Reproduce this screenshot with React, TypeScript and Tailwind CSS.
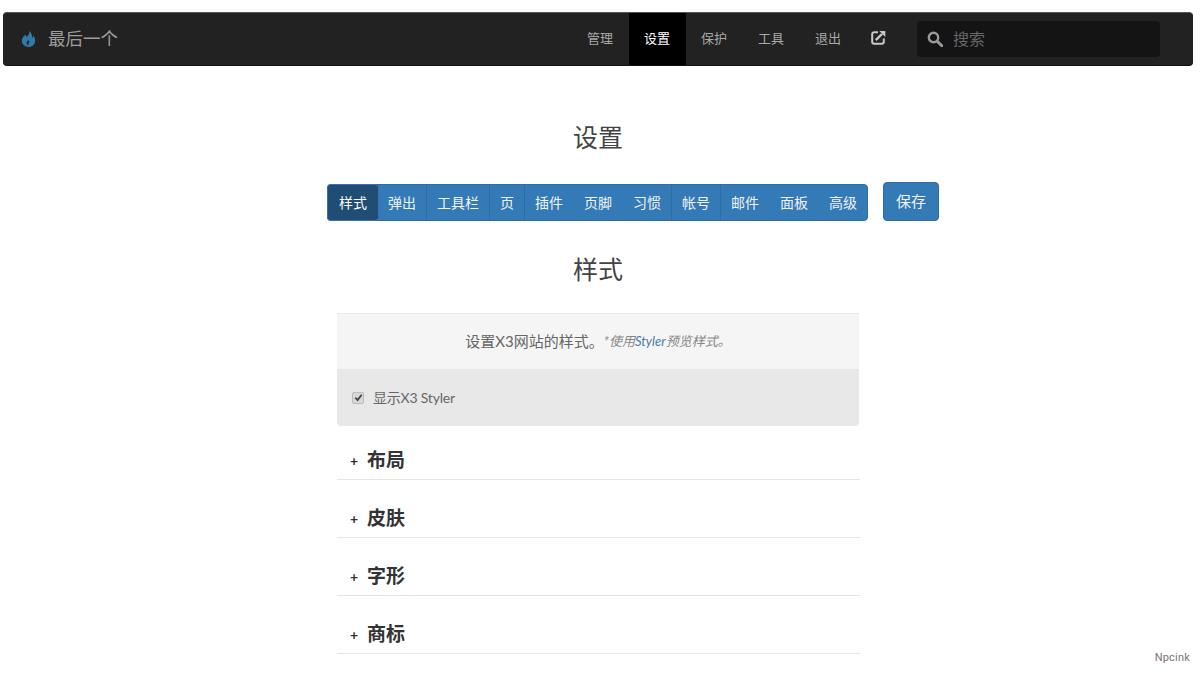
import React from "react";

const tabs: [string, string][] = [
  ["样式", "flex items-center rounded-[3px] bg-[#204d74] px-[11px] text-[14px] text-white shadow-[0_0_0_1px_#3a6fb0]"],
  ["弹出", "flex items-center px-[10px] text-[14px] text-[#f2f2f2]"],
  ["工具栏", "flex items-center border-l border-[#2e6da4] px-[10px] text-[14px] text-[#f2f2f2]"],
  ["页", "flex items-center border-l border-[#2e6da4] px-[10px] text-[14px] text-[#f2f2f2]"],
  ["插件", "flex items-center border-l border-[#2e6da4] px-[10px] text-[14px] text-[#f2f2f2]"],
  ["页脚", "flex items-center border-l border-[#337ab7] px-[10px] text-[14px] text-[#f2f2f2]"],
  ["习惯", "flex items-center border-l border-[#337ab7] px-[10px] text-[14px] text-[#f2f2f2]"],
  ["帐号", "flex items-center border-l border-[#2e6da4] px-[10px] text-[14px] text-[#f2f2f2]"],
  ["邮件", "flex items-center border-l border-[#2e6da4] px-[10px] text-[14px] text-[#f2f2f2]"],
  ["面板", "flex items-center border-l border-[#337ab7] px-[10px] text-[14px] text-[#f2f2f2]"],
  ["高级", "flex items-center border-l border-[#337ab7] px-[10px] text-[14px] text-[#f2f2f2]"],
];
const navItems = ["管理", "设置", "保护", "工具", "退出"];
const sections = ["布局", "皮肤", "字形", "商标"];

function Flame() {
  return (
    <svg viewBox="0 0 18 20" className="w-[15px] h-[18px]" fill="#2f7ba6">
      <path d="M9.800 0.500c.6 2.200-.3 3.800-1.500 5.300-.8 1-1.500 1.800-2 2.100.1-1.200-.2-2.200-1.100-3C3.300 6.500 1 8.800 1 12.200c0 4.200 3.300 7.300 7.900 7.300 4.700 0 8.100-3.100 8.100-7.500 0-2.800-1.100-4.800-2.500-6.300.1 1.200-.2 2.200-1.100 3C13.400 5 12.400 2.200 9.800.5zM8.800 17.500c-1.400-.5-2.300-1.700-2-3.200.2-1.300 1.200-2.300 2.200-3.500-.1 1.300.5 2 1.400 2.200-.9 1.300-1.700 2.700-1.600 4.500z" />
    </svg>
  );
}

function ShareIcon() {
  return (
    <svg viewBox="0 0 15 15" className="w-[15px] h-[15px]" fill="none" stroke="#c9c9c9">
      <path d="M7 2.200H3.200A2 2 0 0 0 1.200 4.200v7.600a2 2 0 0 0 2 2h7.600a2 2 0 0 0 2-2V8.500" strokeWidth="2" />
      <path d="M4.800 10.200L11 4" strokeWidth="2.400" />
      <path d="M8.300 1h6v6z" fill="#c9c9c9" stroke="none" />
    </svg>
  );
}

function SearchIcon() {
  return (
    <svg viewBox="0 0 16 16" className="w-[16px] h-[16px]" fill="none" stroke="#9a9a9a">
      <circle cx="6.500" cy="6.500" r="4.700" strokeWidth="2.400" />
      <path d="M10.200 10.200L14.800 14.800" strokeWidth="3" strokeLinecap="round" />
    </svg>
  );
}

export default function App() {
  return (
    <div className="relative h-[673px] overflow-hidden bg-white pt-3 pl-[3px] font-['Lato','Noto_Sans_CJK_SC',sans-serif] text-[#444]">
      <nav className="flex h-[53px] w-[1190px] items-stretch rounded-[4px] border-t border-t-[#555] bg-[#222] shadow-[0_1px_0_#111]">
        <div className="flex items-center gap-[12px] pl-[18px]">
          <Flame />
          <span className="text-[17.5px] text-[#9d9d9d]">最后一个</span>
        </div>
        <div className="ml-auto flex items-stretch">
          {navItems.map((n) => (
            <div
              key={n}
              className={
                n === "设置"
                  ? "flex w-[57px] items-center justify-center bg-black text-[13px] text-white"
                  : "flex w-[57px] items-center justify-center text-[13px] text-[#a8a8a8]"
              }
            >
              {n}
            </div>
          ))}
          <div className="flex w-[43.5px] items-start justify-center pt-[17px]">
            <ShareIcon />
          </div>
        </div>
        <div className="ml-[17px] mr-[33px] mt-2 flex h-9 w-[243px] items-center gap-[10px] rounded-[4px] bg-[#141414] pl-[10px]">
          <SearchIcon />
          <span className="text-[16px] text-[#666]">搜索</span>
        </div>
      </nav>

      <h1 className="mt-[54px] w-[1190px] text-center text-[25px] leading-[36px] font-normal text-[#444]">设置</h1>

      <div className="mt-[27px] ml-[324px] flex items-start">
        <div className="mt-[2px] flex h-[37px] w-[541px] rounded-[4px] border border-[#2e6da4] bg-[#337ab7]">
          {tabs.map(([t, cls]) => (
            <div key={t} className={cls}>
              {t}
            </div>
          ))}
        </div>
        <div className="ml-[15px] flex h-[39px] w-[56px] items-center justify-center rounded-[4px] border border-[#2e6da4] bg-[#337ab7] text-[15px] text-[#f2f2f2]">
          保存
        </div>
      </div>

      <h2 className="mt-[30px] w-[1190px] text-center text-[25px] leading-[36px] font-normal text-[#444]">样式</h2>

      <div className="mt-[26px] ml-[334px] w-[522px]">
        <div className="flex h-[56px] items-center justify-center border-t border-[#e7e7e7] bg-[#f5f5f5] text-[15px] text-[#666]">
          <span>设置X3网站的样式。</span>
          <em className="text-[13px] text-[#888]">
            *使用<span className="text-[#4a7ba8]">Styler</span>预览样式。
          </em>
        </div>
        <div className="flex h-[57px] items-center gap-[9px] rounded-b-[4px] bg-[#e8e8e8] pl-[15px] text-[14px] text-[#666]">
          <span className="flex h-[12px] w-[12px] items-center justify-center rounded-[2px] border border-[#bbb] bg-[#d8d8d8]">
            <svg viewBox="0 0 10 10" className="w-[9px] h-[9px]" fill="none" stroke="#444" strokeWidth="2">
              <path d="M1.500 5.200L4 7.800 8.500 2" />
            </svg>
          </span>
          <span className="tracking-[-0.2px]">显示X3 Styler</span>
        </div>
      </div>

      <div className="-mt-[4px] ml-[334px] w-[523px]">
        {sections.map((s) => (
          <div key={s} className="flex h-[58px] items-end border-b border-[#e5e5e5] pb-[6px] pl-[13px]">
            <span className="mr-[10px] mb-[3px] w-[7px] text-[14px] leading-[18px] font-bold text-[#333]">+</span>
            <span className="text-[19px] leading-[26px] font-bold text-[#333]">{s}</span>
          </div>
        ))}
      </div>

      <div className="absolute right-[10px] bottom-[8px] font-['Roboto',sans-serif] text-[11px] leading-[14px] tracking-[0.2px] text-[#777]">Npcink</div>
    </div>
  );
}
